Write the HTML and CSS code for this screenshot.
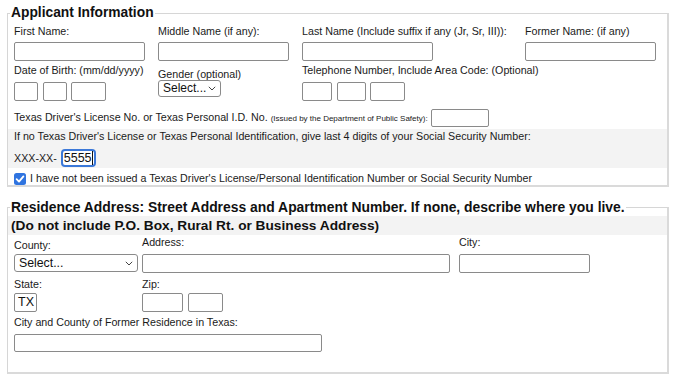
FILE: index.html
```html
<!DOCTYPE html>
<html>
<head>
<meta charset="utf-8">
<link rel="stylesheet" href="styles.css">
</head>
<body>
<div class="page">
  <fieldset class="fs fs-applicant">
    <legend class="lg">Applicant Information</legend>
    <div class="grid-a">
      <div class="cell">
        <label class="lbl">First Name:</label>
        <span class="inp w131"></span>
      </div>
      <div class="cell">
        <label class="lbl">Middle Name (if any):</label>
        <span class="inp w131"></span>
      </div>
      <div class="cell">
        <label class="lbl">Last Name (Include suffix if any (Jr, Sr, III)):</label>
        <span class="inp w131"></span>
      </div>
      <div class="cell">
        <label class="lbl">Former Name: (if any)</label>
        <span class="inp w131"></span>
      </div>
      <div class="cell row2">
        <label class="lbl">Date of Birth: (mm/dd/yyyy)</label>
        <div class="trio">
          <span class="inp w24"></span><span class="inp w24"></span><span class="inp w35"></span>
        </div>
      </div>
      <div class="cell row2 gender">
        <label class="lbl lbl-gender">Gender (optional)</label>
        <span class="sel w63">Select...<svg class="chev" width="8" height="5" viewBox="0 0 8 5"><polyline points="0.8,0.8 4,4 7.2,0.8" fill="none" stroke="#444" stroke-width="1"/></svg></span>
      </div>
      <div class="cell row2 span2">
        <label class="lbl">Telephone Number, Include Area Code: (Optional)</label>
        <div class="trio">
          <span class="inp w30"></span><span class="inp w29"></span><span class="inp w35"></span>
        </div>
      </div>
    </div>
    <div class="dl-row">
      <span class="txt">Texas Driver's License No. or Texas Personal I.D. No. <small class="tiny">(Issued by the Department of Public Safety):</small></span>
      <span class="inp w58 h18"></span>
    </div>
    <div class="gray-row">
      <div class="txt line">If no Texas Driver's License or Texas Personal Identification, give last 4 digits of your Social Security Number:</div>
      <div class="ssn">
        <span class="txt">XXX-XX-</span>
        <span class="inp focus">5555<span class="caret"></span></span>
      </div>
    </div>
    <div class="check-row">
      <svg class="cb" width="12" height="12" viewBox="0 0 12 12"><rect x="0" y="0" width="12" height="12" rx="2.5" fill="#2f74e0"/><polyline points="2.6,6.2 5,8.6 9.4,3.4" fill="none" stroke="#fff" stroke-width="1.8" stroke-linecap="round" stroke-linejoin="round"/></svg>
      <span class="txt">I have not been issued a Texas Driver's License/Personal Identification Number or Social Security Number</span>
    </div>
  </fieldset>

  <fieldset class="fs fs-res">
    <legend class="lg">Residence Address: Street Address and Apartment Number. If none, describe where you live.</legend>
    <div class="gray-head">(Do not include P.O. Box, Rural Rt. or Business Address)</div>
    <div class="grid-b">
      <div class="cell county">
        <label class="lbl">County:</label>
        <span class="sel w124">Select...<svg class="chev" width="8" height="5" viewBox="0 0 8 5"><polyline points="0.8,0.8 4,4 7.2,0.8" fill="none" stroke="#444" stroke-width="1"/></svg></span>
      </div>
      <div class="cell addr">
        <label class="lbl">Address:</label>
        <span class="inp w308"></span>
      </div>
      <div class="cell addr">
        <label class="lbl">City:</label>
        <span class="inp w131"></span>
      </div>
      <div class="cell st">
        <label class="lbl">State:</label>
        <span class="inp w23 val">TX</span>
      </div>
      <div class="cell st">
        <label class="lbl">Zip:</label>
        <div class="trio">
          <span class="inp w41"></span><span class="inp w35"></span>
        </div>
      </div>
    </div>
    <div class="former">
      <label class="lbl">City and County of Former Residence in Texas:</label>
      <span class="inp w308 h18"></span>
    </div>
  </fieldset>
</div>
</body>
</html>
```

FILE: styles.css
```css
* { box-sizing: border-box; }
html, body { margin: 0; padding: 0; background: #fff; }
body {
  font-family: "Liberation Sans", Arial, sans-serif;
  font-size: 10.7px;
  color: #1a1a1a;
  width: 680px;
  height: 375px;
  overflow: hidden;
}
.page { padding: 5px 0 0 7px; }

.fs {
  margin: 0;
  width: 662px;
  border: 1px solid #d6d6d6;
  border-right: 2px solid #dadada;
  border-bottom: 2px solid #dadada;
  padding: 0 6px;
  min-width: 0;
}
.lg {
  font-size: 13.8px;
  font-weight: bold;
  line-height: 16px;
  padding: 0 1px;
  margin-left: -4px;
  color: #111;
}
.fs-res .lg { font-size: 13.9px; }

.lbl { display: block; line-height: 13px; white-space: nowrap; }
.txt { line-height: 13px; white-space: nowrap; }

.inp {
  display: inline-block;
  height: 19px;
  border: 1px solid #8a8a8a;
  border-radius: 2px;
  background: #fff;
  vertical-align: top;
}
.h18 { height: 18px; }
.w131 { width: 131px; }
.w24 { width: 24px; }
.w23 { width: 23px; }
.w29 { width: 29px; }
.w30 { width: 30px; }
.w35 { width: 35px; }
.w41 { width: 41px; }
.w58 { width: 58px; }
.w63 { width: 63px; }
.w124 { width: 124px; }
.w308 { width: 308px; }

.sel {
  display: flex;
  align-items: center;
  justify-content: space-between;
  height: 17px;
  padding: 0 4px 0 4px;
  border: 1px solid #8a8a8a;
  border-radius: 3px;
  background: #fff;
  font-size: 12px;
  line-height: 15px;
  color: #111;
}
.sel.w124 { height: 18px; font-size: 12.3px; }
.chev { flex: none; }

.grid-a {
  display: grid;
  grid-template-columns: 144px 144px 223px 1fr;
  padding-top: 4px;
}
.cell { display: flex; flex-direction: column; align-items: flex-start; }
.cell .lbl { margin-bottom: 4px; }
.row2 { padding-top: 3px; }
.row2 .lbl { margin-bottom: 5px; }
.gender .lbl-gender { margin-top: 5px; line-height: 11px; margin-bottom: 0; }
.gender .sel { margin-top: 0; }
.span2 { grid-column: 3 / span 2; }
.trio { display: flex; gap: 5px; }
.trio .w24 + .w35, .trio .w29 + .w35 { margin-left: -1px; }

.dl-row {
  display: flex;
  align-items: center;
  gap: 3px;
  margin-top: 8px;
}
.tiny { font-size: 8px; }

.gray-row {
  background: #f3f3f3;
  margin: 2px -6px 0;
  padding: 1px 6px 1px;
}
.gray-row .line { margin-bottom: 6px; }
.ssn { display: flex; align-items: center; gap: 4px; }
.inp.focus {
  width: 35px;
  height: 18px;
  border: 2px solid #3b78d8;
  border-radius: 4px;
  font-size: 12.5px;
  line-height: 14px;
  padding-left: 1px;
  color: #111;
  display: inline-flex;
  align-items: center;
}
.caret { display: inline-block; width: 1px; height: 14px; background: #111; }

.check-row {
  display: flex;
  align-items: center;
  gap: 4px;
  margin-top: 4px;
  padding-bottom: 0;
}
.cb { flex: none; }

.fs-res { margin-top: 12px; padding-bottom: 20px; }
.gray-head {
  background: #f3f3f3;
  margin: 1px -6px 0;
  padding: 0 3px;
  font-size: 13.7px;
  font-weight: bold;
  line-height: 19px;
  color: #111;
}
.grid-b {
  display: grid;
  grid-template-columns: 128px 317px 1fr;
}
.county .lbl { margin-top: 4px; margin-bottom: 2px; }
.addr .lbl { margin-top: 1px; margin-bottom: 5px; }
.st { padding-top: 5px; }
.st .lbl { margin-bottom: 2px; }
.val {
  font-size: 12.5px;
  line-height: 17px;
  padding-left: 3px;
  color: #111;
}
.former { padding-top: 4px; }
.former .lbl { margin-bottom: 5px; }
```
